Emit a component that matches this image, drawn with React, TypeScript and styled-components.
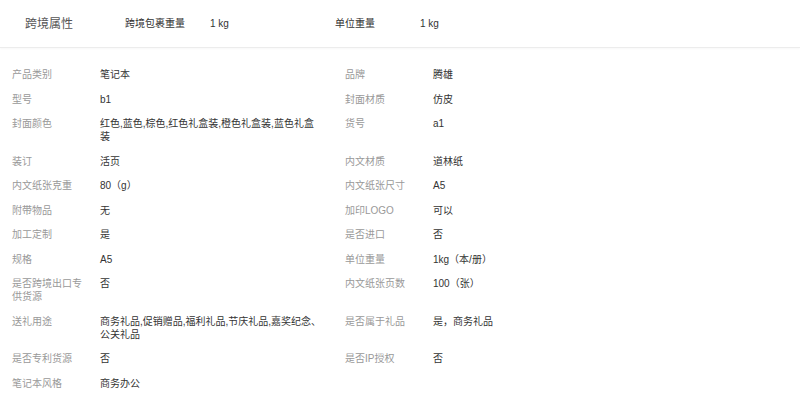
import React from 'react';
import styled, { createGlobalStyle } from 'styled-components';

const GlobalStyle = createGlobalStyle`
  html, body {
    margin: 0;
    padding: 0;
    background: #fff;
  }
  body {
    font-family: "Liberation Sans", "Noto Sans CJK SC", sans-serif;
  }
`;

type Attr = { label: string; value: string };

const crossBorder: Attr[] = [
  { label: '跨境包裹重量', value: '1 kg' },
  { label: '单位重量', value: '1 kg' },
];

const attrs: Attr[] = [
  { label: '产品类别', value: '笔记本' },
  { label: '品牌', value: '腾雄' },
  { label: '型号', value: 'b1' },
  { label: '封面材质', value: '仿皮' },
  { label: '封面颜色', value: '红色,蓝色,棕色,红色礼盒装,橙色礼盒装,蓝色礼盒装' },
  { label: '货号', value: 'a1' },
  { label: '装订', value: '活页' },
  { label: '内文材质', value: '道林纸' },
  { label: '内文纸张克重', value: '80（g）' },
  { label: '内文纸张尺寸', value: 'A5' },
  { label: '附带物品', value: '无' },
  { label: '加印LOGO', value: '可以' },
  { label: '加工定制', value: '是' },
  { label: '是否进口', value: '否' },
  { label: '规格', value: 'A5' },
  { label: '单位重量', value: '1kg（本/册）' },
  { label: '是否跨境出口专供货源', value: '否' },
  { label: '内文纸张页数', value: '100（张）' },
  { label: '送礼用途', value: '商务礼品,促销赠品,福利礼品,节庆礼品,嘉奖纪念、公关礼品' },
  { label: '是否属于礼品', value: '是，商务礼品' },
  { label: '是否专利货源', value: '否' },
  { label: '是否IP授权', value: '否' },
  { label: '笔记本风格', value: '商务办公' },
];

const Page = styled.div`
  width: 800px;
  background: #fff;
`;

const Header = styled.div`
  display: flex;
  align-items: center;
  height: 47px;
  padding-left: 25px;
  border-bottom: 1px solid #ececec;
  box-shadow: 0 1px 2px rgba(0, 0, 0, 0.03);
`;

const HeaderTitle = styled.div`
  width: 100px;
  font-size: 12px;
  line-height: 16px;
  color: #555;
`;

const HeaderItem = styled.div`
  display: flex;
  align-items: center;
  width: 210px;
  font-size: 10px;
  line-height: 16px;
  color: #333;
`;

const HeaderLabel = styled.span`
  width: 85px;
`;

const Grid = styled.div`
  display: grid;
  grid-template-columns: 333px 333px;
  padding-top: 14px;
`;

const Cell = styled.div`
  display: flex;
  padding: 6px 0 5.5px 12px;
  font-size: 10px;
  line-height: 13px;
`;

const Label = styled.div`
  width: 78px;
  padding-right: 10px;
  color: #999;
`;

const Value = styled.div`
  width: 222.5px;
  color: #333;
  word-break: break-all;
`;

export default function App() {
  return (
    <Page>
      <GlobalStyle />
      <Header>
        <HeaderTitle>跨境属性</HeaderTitle>
        {crossBorder.map((a) => (
          <HeaderItem key={a.label}>
            <HeaderLabel>{a.label}</HeaderLabel>
            <span>{a.value}</span>
          </HeaderItem>
        ))}
      </Header>
      <Grid>
        {attrs.map((a, i) => (
          <Cell key={i}>
            <Label>{a.label}</Label>
            <Value>{a.value}</Value>
          </Cell>
        ))}
      </Grid>
    </Page>
  );
}
